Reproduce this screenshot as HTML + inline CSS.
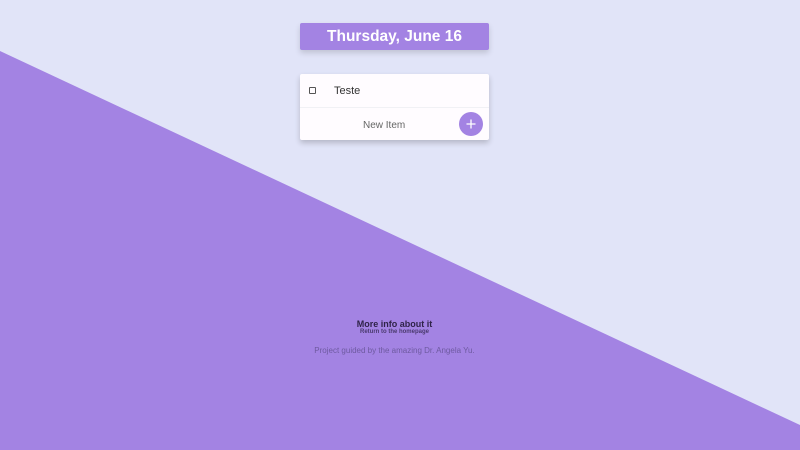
<!DOCTYPE html>
<html><head><meta charset="utf-8"><style>
html,body{margin:0;padding:0;width:800px;height:450px;overflow:hidden;background:#e1e4f8;font-family:"Liberation Sans",sans-serif;}
.bg{position:absolute;left:0;top:0;width:800px;height:450px;background:#a383e3;clip-path:polygon(0 51px,800px 425px,800px 450px,0 450px);}
.hdr{position:absolute;left:300px;top:23px;width:189px;height:27px;background:#a383e3;border-radius:2px;box-shadow:0 3px 6px rgba(0,0,0,.15);color:#fff;font-weight:bold;font-size:15.5px;text-align:center;line-height:27px;}
.card{position:absolute;left:300px;top:74px;width:189px;height:66px;background:#fffcff;border-radius:2px;box-shadow:0 3px 6px rgba(0,0,0,.2);}
.row1{height:33px;border-bottom:1px solid #f1f1f5;position:relative;}
.cb{position:absolute;left:9px;top:13px;width:5px;height:5px;border:1px solid #555;border-radius:1px;}
.t{position:absolute;left:34px;top:11px;font-size:11px;color:#333;}
.ni{position:absolute;left:63px;top:46px;font-size:10px;color:#666;}
.plus{position:absolute;left:159px;top:38px;width:24px;height:24px;border-radius:50%;background:#a383e3;}
.f1{position:absolute;left:0;width:789px;text-align:center;}
</style></head><body>
<div class="bg"></div>
<div class="hdr">Thursday, June 16</div>
<div class="card"><div class="row1"><div class="cb"></div><div class="t">Teste</div></div>
<div class="ni">New Item</div><div class="plus"><svg width="24" height="24"><path d="M12 7.5V16.5M7.5 12H16.5" stroke="#fff" stroke-width="1.3"/></svg></div></div>
<div class="f1" style="top:319px;font-size:9px;font-weight:bold;color:#2f2348;">More info about it</div>
<div class="f1" style="top:329px;font-size:6px;font-weight:bold;color:#4a3a6e;">Return to the homepage</div>
<div class="f1" style="top:346px;font-size:8px;color:#6e5aa0;">Project guided by the amazing Dr. Angela Yu.</div>
</body></html>
